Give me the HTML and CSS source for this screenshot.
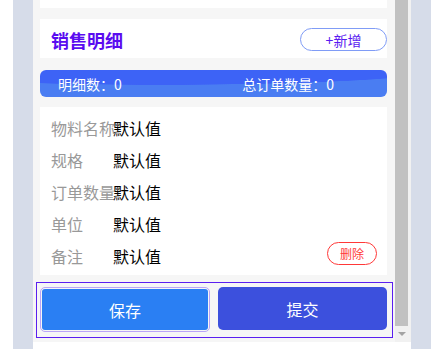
FILE: index.html
```html
<!DOCTYPE html>
<html lang="zh-CN">
<head>
<meta charset="utf-8">
<title>销售明细</title>
<link rel="stylesheet" href="styles.css">
</head>
<body>
<div class="frame">
  <div class="phone">
    <div class="viewport">
      <div class="content">
        <div class="prev-card"></div>
        <div class="header-card">
          <h2 class="title">销售明细</h2>
          <button class="btn-add">+新增</button>
        </div>
        <div class="banner">
          <span>明细数：0</span>
          <span>总订单数量：0</span>
        </div>
        <div class="detail-card">
          <div class="row"><span class="label">物料名称</span><span class="value">默认值</span></div>
          <div class="row"><span class="label">规格</span><span class="value">默认值</span></div>
          <div class="row"><span class="label">订单数量</span><span class="value">默认值</span></div>
          <div class="row"><span class="label">单位</span><span class="value">默认值</span></div>
          <div class="row"><span class="label">备注</span><span class="value">默认值</span><button class="btn-del">删除</button></div>
        </div>
        <div class="actions">
          <button class="btn-save">保存</button>
          <button class="btn-submit">提交</button>
        </div>
      </div>
      <div class="scrollbar">
        <div class="thumb"></div>
        <div class="arrow"><span class="tri"></span></div>
      </div>
    </div>
  </div>
</div>
</body>
</html>
```
FILE: styles.css
```css
* { box-sizing: border-box; }
html, body { margin: 0; padding: 0; background: #fff; }
body {
  font-family: "Noto Sans CJK SC", "Noto Sans", sans-serif;
  width: 440px;
  height: 349px;
  overflow: hidden;
}
.frame {
  margin-left: 13px;
  width: 418px;
  height: 349px;
  background: #d6dce9;
  padding: 0 20px;
}
.phone {
  height: 349px;
  background: #fff;
}
.viewport {
  height: 342px;
  display: flex;
  background: #f6f6f6;
}
.content {
  flex: 1;
  padding: 0 8px 0 7px;
}
.prev-card {
  height: 8px;
  background: #fff;
}
.header-card {
  margin-top: 11px;
  height: 39px;
  background: #fff;
  display: flex;
  align-items: center;
  justify-content: space-between;
  padding: 2px 0 0 11px;
}
.title {
  margin: 0;
  font-size: 18px;
  font-weight: 700;
  line-height: 24px;
  color: #5a0cf0;
}
.btn-add {
  width: 87px;
  height: 23px;
  border: 1px solid #809cf6;
  border-radius: 12px;
  background: #fff;
  color: #5a1cf0;
  font-family: inherit;
  font-size: 14px;
  line-height: 20px;
  padding: 0;
}
.banner {
  margin-top: 12px;
  height: 27px;
  border-radius: 6px;
  display: flex;
  align-items: center;
  justify-content: space-between;
  padding: 0 53px 0 18px;
  color: #fff;
  font-size: 14px;
  line-height: 20px;
  background: radial-gradient(ellipse 80% 15px at 35% 0, #3d63f6 97%, #4a7df2 100%);
}
.detail-card {
  margin-top: 10px;
  height: 168px;
  background: #fff;
  padding: 5px 10px 3px 11px;
}
.row {
  display: flex;
  align-items: flex-start;
  height: 32px;
  font-size: 16px;
  line-height: 32px;
}
.label {
  width: 62px;
  flex: 0 0 62px;
  white-space: nowrap;
  color: #999;
}
.value {
  color: #000;
  flex: 1;
}
.btn-del {
  margin-top: 2px;
  width: 50px;
  height: 23px;
  border: 1px solid #ff3838;
  border-radius: 12px;
  background: #fff;
  color: #ff3838;
  font-family: inherit;
  font-size: 12px;
  line-height: 18px;
  padding: 0;
}
.actions {
  margin: 7px -6px 0 -4px;
  border: 1px solid #5a1ff0;
  padding: 4px 5px 5px 3px;
  display: flex;
  align-items: flex-start;
  gap: 8px;
}
.btn-save {
  flex: 0 0 170px;
  height: 45px;
  border: 1px solid #b9a5f7;
  padding: 1px;
  border-radius: 5px;
  background: #2a7ff3;
  background-clip: content-box;
  color: #fff;
  font-family: inherit;
  font-size: 16px;
}
.btn-submit {
  flex: 1;
  height: 43px;
  border: 0;
  border-radius: 5px;
  background: #3c50dd;
  color: #fff;
  font-family: inherit;
  font-size: 16px;
}
.scrollbar {
  width: 16px;
  padding-right: 3px;
  background: #f1f1f1;
  display: flex;
  flex-direction: column;
}
.thumb {
  height: 326px;
  background: #c1c1c1;
}
.arrow {
  flex: 1;
  display: flex;
  align-items: center;
  justify-content: center;
}
.tri {
  width: 0;
  height: 0;
  border-left: 4px solid transparent;
  border-right: 4px solid transparent;
  border-top: 4px solid #a3a3a3;
}
```
